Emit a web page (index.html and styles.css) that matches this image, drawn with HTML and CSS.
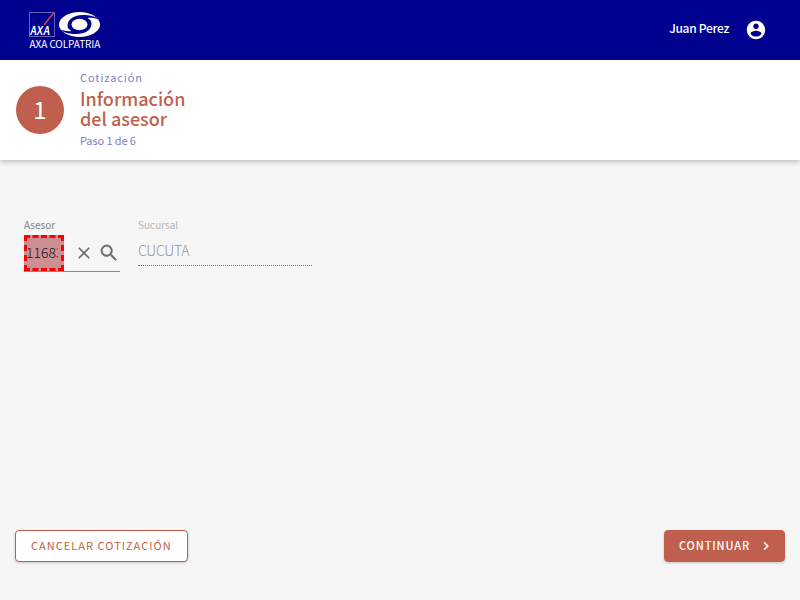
FILE: index.html
```html
<!DOCTYPE html>
<html lang="es">
<head>
<meta charset="utf-8">
<title>Cotización</title>
<link rel="stylesheet" href="styles.css">
</head>
<body>
<header class="topbar">
  <div class="brand">
    <svg class="brand-marks" width="74" height="27" viewBox="0 0 74 27">
      <rect x="1.500" y="1.500" width="25" height="24" fill="#00008f" stroke="#6262b8"/>
      <path d="M16 14L25.500 2" stroke="#e0405c" stroke-width="1.400"/>
      <text class="axa" x="2" y="23.500" textLength="20" lengthAdjust="spacingAndGlyphs">AXA</text>
      <ellipse cx="51.500" cy="13.500" rx="20.500" ry="12.500" fill="#fff"/>
      <path fill="#00008f" d="M39.500 15C39.500 8 46 4 55 4C61 4 67 5 71 8.500C67 7 62 6.500 59.500 7C62.500 8.500 63.500 10.500 63.500 12.500C63.500 19 57 23 48 23C42 23 36 22 32 18.500C36 20 41 20.500 43.500 20C40.500 18.500 39.500 16.500 39.500 15Z"/>
      <ellipse cx="51.500" cy="13.500" rx="8" ry="5.700" fill="#fff"/>
    </svg>
    <div class="brand-name">AXA COLPATRIA</div>
  </div>
  <div class="user">
    <span>Juan Perez</span>
    <svg width="22" height="22" viewBox="0 0 24 24" fill="#fff"><path d="M12 2C6.480 2 2 6.480 2 12s4.480 10 10 10 10-4.480 10-10S17.520 2 12 2zm0 3c1.660 0 3 1.340 3 3s-1.340 3-3 3-3-1.340-3-3 1.340-3 3-3zm0 14.200c-2.500 0-4.710-1.280-6-3.220.03-1.990 4-3.080 6-3.080 1.990 0 5.970 1.090 6 3.080-1.290 1.940-3.500 3.220-6 3.220z"/></svg>
  </div>
</header>
<section class="step">
  <div class="step-number">1</div>
  <div class="step-text">
    <div class="step-kicker">Cotización</div>
    <h1>Información<br>del asesor</h1>
    <div class="step-count">Paso 1 de 6</div>
  </div>
</section>
<main class="form">
  <div class="field advisor">
    <label>Asesor</label>
    <div class="control">
      <div class="code"><span>11683</span></div>
      <svg class="clear" width="20" height="20" viewBox="0 0 24 24" fill="#6b6b6b"><path d="M19 6.410L17.590 5 12 10.590 6.410 5 5 6.410 10.590 12 5 17.590 6.410 19 12 13.410 17.590 19 19 17.590 13.410 12z"/></svg>
      <svg class="search" width="22" height="22" viewBox="0 0 24 24" fill="#6b6b6b" stroke="#6b6b6b" stroke-width=".2"><path d="M15.500 14h-.79l-.28-.27C15.410 12.590 16 11.110 16 9.500 16 5.910 13.090 3 9.500 3S3 5.910 3 9.500 5.910 16 9.500 16c1.610 0 3.090-.59 4.230-1.570l.27.28v.79l5 4.990L20.490 19l-4.990-5zm-6 0C7.010 14 5 11.990 5 9.500S7.010 5 9.500 5 14 7.010 14 9.500 11.990 14 9.500 14z"/></svg>
    </div>
  </div>
  <div class="field branch">
    <label>Sucursal</label>
    <div class="value">CUCUTA</div>
  </div>
</main>
<footer class="actions">
  <button class="btn outline">CANCELAR COTIZACIÓN</button>
  <button class="btn solid">CONTINUAR
    <svg width="16" height="16" viewBox="0 0 24 24" fill="#fff" stroke="#fff" stroke-width=".5"><path d="M10 6L8.590 7.410 13.170 12l-4.580 4.590L10 18l6-6z"/></svg>
  </button>
</footer>
</body>
</html>
```
FILE: styles.css
```css
* { box-sizing: border-box; }
body {
  margin: 0;
  height: 600px;
  display: flex;
  flex-direction: column;
  overflow: hidden;
  background: #f6f6f6;
  font-family: "Noto Sans CJK SC", "Noto Sans", sans-serif;
}
.topbar {
  height: 60px;
  flex: none;
  display: flex;
  justify-content: space-between;
  background: #00008f;
  color: #fff;
  padding: 0 33px 0 28px;
}
.brand { padding-top: 11px; width: 76px; }
.brand-marks { display: block; }
.axa { font: italic 700 12px "Liberation Sans", sans-serif; fill: #fff; }
.brand-name { font-size: 10px; letter-spacing: -.08px; line-height: 11px; padding-left: 1.500px; white-space: nowrap; }
.user {
  display: flex;
  align-items: center;
  gap: 16px;
  font-size: 12px;
  font-weight: 500;
  letter-spacing: -.3px;
}
.user span { line-height: 18px; margin-top: -4px; }
.step {
  height: 100px;
  flex: none;
  display: flex;
  padding: 10px 16px;
  gap: 16px;
  background: #fff;
  box-shadow: 0 1px 6px rgba(0, 0, 0, .3);
}
.step-number {
  width: 48px;
  height: 48px;
  margin-top: 16px;
  border-radius: 50%;
  background: #c05f4d;
  color: #fff;
  font-size: 24px;
  line-height: 46px;
  text-align: center;
}
.step-kicker { font-size: 11px; line-height: 15px; letter-spacing: .92px; color: #8080c7; }
h1 { margin: 3px 0 4px; font-size: 18px; line-height: 20px; font-weight: 500; color: #c05f4d; }
.step-count { font-size: 11px; line-height: 16px; letter-spacing: -.1px; color: #8080c7; }
.form { flex: 1; display: flex; gap: 18px; padding: 57px 24px 0; }
.field label { display: block; font-size: 10px; line-height: 16px; }
.advisor { width: 96px; }
.advisor label { color: #858585; }
.control {
  height: 37px;
  display: flex;
  align-items: center;
  margin-top: 2px;
  border-bottom: 1px solid #8a8a8a;
}
.code {
  width: 40px;
  height: 36px;
  border: 3px dashed #f00;
  background: #cc8f94;
  color: #1c1220;
  font-size: 14px;
  font-weight: 300;
  line-height: 29px;
}
.code span { display: block; margin-left: -1px; width: 32px; overflow: hidden; }
.clear { margin-left: 10px; }
.search { margin-left: 4px; }
.branch { width: 174px; }
.branch label { color: #b5b5b5; }
.value {
  height: 33px;
  border-bottom: 1px dotted #777;
  color: #8f959b;
  font-size: 14px;
  font-weight: 300;
  letter-spacing: -.25px;
  line-height: 34px;
}
.actions { display: flex; justify-content: space-between; padding: 0 15px 38px; }
.btn {
  height: 32px;
  display: flex;
  align-items: center;
  border: 1px solid #c05f4d;
  border-radius: 4px;
  padding: 0 14px 2px 15px;
  font-family: inherit;
  font-size: 11px;
  letter-spacing: 1.030px;
  white-space: nowrap;
  box-shadow: 0 1px 3px rgba(0, 0, 0, .2);
}
.outline { width: 173px; background: #fff; color: #c05f4d; }
.solid { width: 121px; justify-content: space-between; padding: 0 10px 2px 14px; background: #c05f4d; color: #fff; font-weight: 500; letter-spacing: .87px; }
.solid svg { position: relative; top: 1px; }
```
